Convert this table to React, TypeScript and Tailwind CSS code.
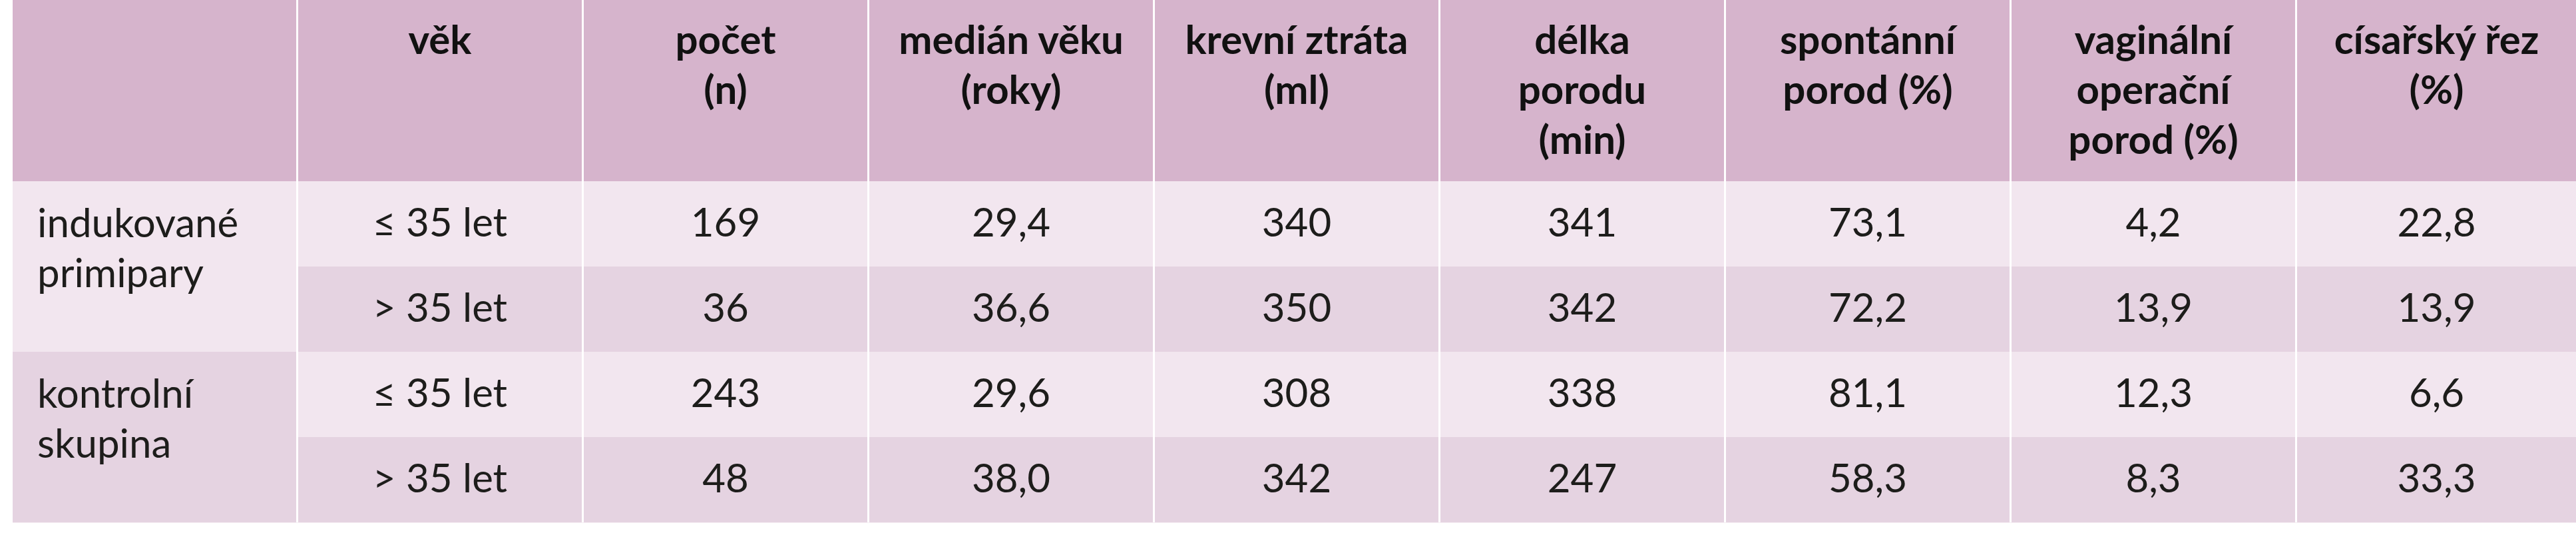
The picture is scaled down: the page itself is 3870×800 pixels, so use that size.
const headers: string[][] = [
  [],
  ['věk'],
  ['počet', '(n)'],
  ['medián věku', '(roky)'],
  ['krevní ztráta', '(ml)'],
  ['délka', 'porodu', '(min)'],
  ['spontánní', 'porod (%)'],
  ['vaginální', 'operační', 'porod (%)'],
  ['císařský řez', '(%)'],
]

const groups = [
  {
    label: ['indukované', 'primipary'],
    rows: [
      ['≤ 35 let', '169', '29,4', '340', '341', '73,1', '4,2', '22,8'],
      ['> 35 let', '36', '36,6', '350', '342', '72,2', '13,9', '13,9'],
    ],
  },
  {
    label: ['kontrolní', 'skupina'],
    rows: [
      ['≤ 35 let', '243', '29,6', '308', '338', '81,1', '12,3', '6,6'],
      ['> 35 let', '48', '38,0', '342', '247', '58,3', '8,3', '33,3'],
    ],
  },
]

export default function App() {
  return (
    <div className="w-[3870px] h-[800px] bg-white pl-[19px] font-['Lato','Liberation_Sans',sans-serif] text-[60px] leading-[75px] text-[#1d1d1b]">
      <div className="grid grid-cols-[repeat(8,426px)_1fr] grid-rows-[272px_repeat(4,128px)] gap-x-[3px] border-b border-[#f6eff4]">
        {headers.map((lines, i) => (
          <div key={i} className="bg-[#d6b4cc] pt-[21px] text-center font-bold text-[#111]">
            {lines.map((l, j) => (
              <div key={j}>{l}</div>
            ))}
          </div>
        ))}
        {groups.map((g, gi) =>
          g.rows.map((row, ri) => {
            const bg = ri === 0 ? 'bg-[#f2e6ef]' : 'bg-[#e5d3e1]'
            return [
              ri === 0 ? (
                <div
                  key={`g${gi}`}
                  className={`row-span-2 pl-[37px] pt-[24px] ${gi === 0 ? 'bg-[#f2e6ef]' : 'bg-[#e5d3e1]'}`}
                >
                  {g.label.map((l, j) => (
                    <div key={j}>{l}</div>
                  ))}
                </div>
              ) : null,
              ...row.map((cell, ci) => (
                <div key={`${gi}-${ri}-${ci}`} className={`${bg} pt-[23px] text-center`}>
                  {cell}
                </div>
              )),
            ]
          })
        )}
      </div>
    </div>
  )
}
